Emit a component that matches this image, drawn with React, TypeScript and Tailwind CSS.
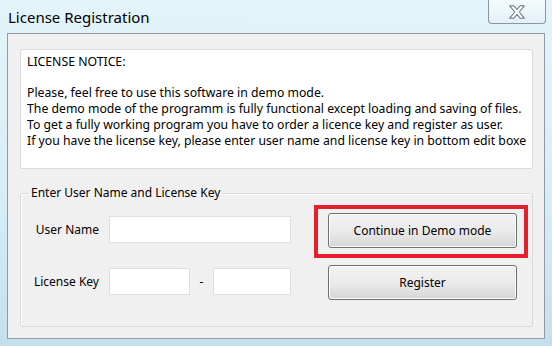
const CloseIcon = () => (
  <svg width="18" height="16" viewBox="0 0 16 14">
    <path
      d="M1.5 1.5H5.2L8 4.8L10.8 1.5H14.5L10 7L14.5 12.5H10.8L8 9.2L5.2 12.5H1.5L6 7Z"
      fill="#ffffff"
      stroke="#6a7581"
      strokeWidth="0.9"
      strokeLinejoin="round"
    />
  </svg>
)

const TextBox = ({ className }: { className: string }) => (
  <div className={`h-[27px] bg-white border border-[#dcdfe3] ${className}`} />
)

const WinButton = ({ label }: { label: string }) => (
  <button className="w-[189px] h-[35px] rounded-[3px] border border-[#707070] bg-gradient-to-b from-[#f3f3f3] via-[#ebebeb] to-[#d6d6d6] text-[12px] text-black shadow-[inset_0_0_0_1px_#fcfcfc]">
    {label}
  </button>
)

export default function App() {
  return (
    <div className="w-[552px] h-[346px] flex flex-col overflow-hidden bg-gradient-to-b from-[#e3f4fa] via-[#d9eff7] to-[#c4e0ec] font-['Noto_Sans',Arial,sans-serif] text-[12px] text-black">
      <div className="h-[33px] flex items-start justify-between pl-[8px] pr-[6px]">
        <span className="pt-[6px] text-[15px] leading-[22px] text-black">
          License Registration
        </span>
        <div className="w-[58px] h-[24px] flex items-center justify-center rounded-b-[4px] border border-t-0 border-[#8a97a3] bg-gradient-to-b from-[#f6fbfd] to-[#e4f0f5]">
          <CloseIcon />
        </div>
      </div>

      <div className="mx-[7px] h-[306px] bg-[#f0f0f0] border border-[#8e9aa6] px-[12px] pt-[15px]">
        <div className="w-[513px] h-[120px] bg-white border border-[#dadada] rounded-[2px] px-[6px] pt-[4px] leading-[16px] text-[12.25px]">
          <p>LICENSE NOTICE:</p>
          <p className="mt-[15px]">
            Please, feel free to use this software in demo mode.
          </p>
          <p>
            The demo mode of the programm is fully functional except loading
            and saving of files.
          </p>
          <p>
            To get a fully working program you have to order a licence key and
            register as user.
          </p>
          <p className="whitespace-nowrap">
            If you have the license key, please enter user name and license key
            in bottom edit boxe
          </p>
        </div>

        <fieldset className="mt-[16px] w-[513px] border border-[#d5dbe0] rounded-[2px] shadow-[inset_1px_1px_0_#ffffff] pb-[26px]">
          <legend className="ml-[8px] px-[2px] leading-[16px]">
            Enter User Name and License Key
          </legend>

          <div className="flex items-start">
            <div className="flex flex-col gap-[25px] pt-[15px]">
              <div className="flex items-center">
                <span className="w-[78px] text-right">User Name</span>
                <TextBox className="ml-[10px] w-[182px]" />
              </div>
              <div className="flex items-center">
                <span className="w-[78px] text-right">License Key</span>
                <TextBox className="ml-[10px] w-[81px]" />
                <span className="w-[23px] text-center">-</span>
                <TextBox className="w-[78px]" />
              </div>
            </div>

            <div className="ml-[23px] pt-[4px] flex flex-col">
              <div className="border-4 border-[#e3202c] pl-[10px] pr-[7px] pt-[4px] pb-[6px]">
                <WinButton label="Continue in Demo mode" />
              </div>
              <div className="ml-[14px] mt-[7px]">
                <WinButton label="Register" />
              </div>
            </div>
          </div>
        </fieldset>
      </div>
    </div>
  )
}
